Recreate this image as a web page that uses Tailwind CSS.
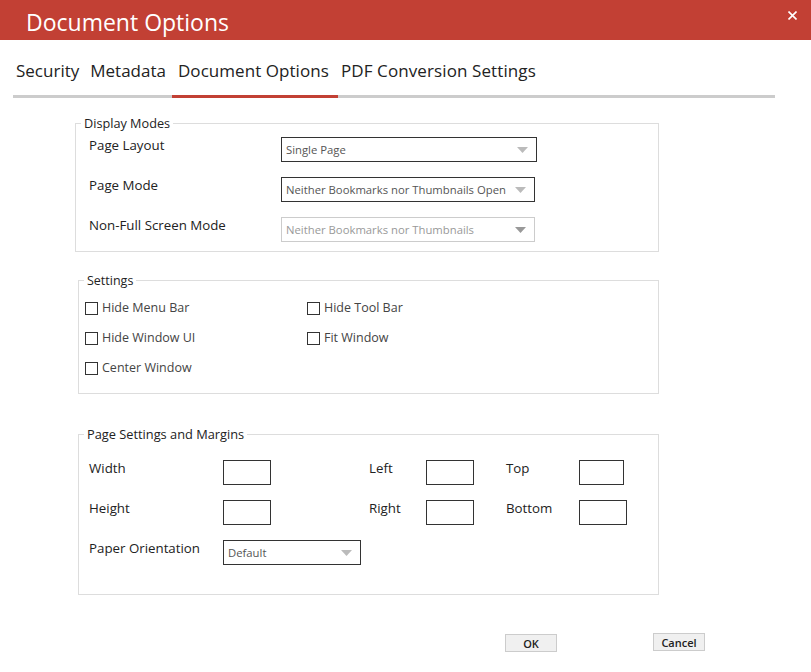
<!DOCTYPE html>
<html lang="en">
<head>
<meta charset="UTF-8" />
<title>Document Options</title>
<script src="https://cdn.jsdelivr.net/npm/@tailwindcss/browser@4"></script>
</head>
<body class="bg-white text-[#222] font-['Open_Sans',sans-serif] overflow-hidden">
<div class="w-[811px] h-[672px]">
  <header class="h-10 bg-[#c24034] flex items-center justify-between pl-[26px] pr-[14px] text-white">
    <h1 class="text-[23px] leading-none mt-[4px]">Document Options</h1>
    <svg class="w-[9px] h-[9px] mb-[10px]" viewBox="0 0 9 9" fill="none" stroke="white" stroke-width="1.6"><path d="M.5.5l8 8M8.5.5l-8 8"/></svg>
  </header>

  <nav class="mt-[16px] ml-[13px] w-[762px] h-[42px] border-b-[3px] border-[#ccc] flex text-[17px] leading-[30px]">
    <div class="h-[42px] pl-[3px] pr-[5px]">Security</div>
    <div class="h-[42px] px-[6px]">Metadata</div>
    <div class="h-[42px] pl-[6px] border-b-[3px] border-[#c24034] w-[166px] whitespace-nowrap tracking-[0.05px]">Document Options</div>
    <div class="h-[42px] pl-[3px] whitespace-nowrap tracking-[0.1px]">PDF Conversion Settings</div>
  </nav>

  <section class="relative mt-[25px] ml-[75px] w-[584px] h-[129px] border border-[#ddd] pt-[13px] pl-[13px]">
    <span class="absolute -top-[9px] left-[5px] bg-white px-[3px] text-[12.7px] leading-[17px]">Display Modes</span>
    <div class="grid grid-cols-[192px_auto] gap-y-[15px] justify-start text-[13.3px]">
      <div class="leading-[17px]">Page Layout</div>
      <div class="w-[256px] h-[25px] border border-[#333] flex items-center justify-between pl-1 pr-[8px] text-[11.3px] text-[#555]"><span class="pt-px">Single Page</span><svg class="w-[11px] h-[6px]" viewBox="0 0 11 6"><path d="M0 0h11L5.5 6z" fill="#bbb"/></svg></div>
      <div class="leading-[17px]">Page Mode</div>
      <div class="w-[254px] h-[25px] border border-[#333] flex items-center justify-between pl-1 pr-[8px] text-[11.3px] text-[#555] whitespace-nowrap"><span class="pt-px">Neither Bookmarks nor Thumbnails Open</span><svg class="w-[11px] h-[6px]" viewBox="0 0 11 6"><path d="M0 0h11L5.5 6z" fill="#bbb"/></svg></div>
      <div class="leading-[17px]">Non-Full Screen Mode</div>
      <div class="w-[254px] h-[25px] border border-[#ccc] flex items-center justify-between pl-1 pr-[8px] text-[11.3px] text-[#999]"><span class="pt-px">Neither Bookmarks nor Thumbnails</span><svg class="w-[11px] h-[6px]" viewBox="0 0 11 6"><path d="M0 0h11L5.5 6z" fill="#999"/></svg></div>
    </div>
  </section>

  <section class="relative mt-[28px] ml-[78px] w-[581px] h-[114px] border border-[#ddd] pt-[19px] pl-[6px]">
    <span class="absolute -top-[9px] left-[5px] bg-white px-[3px] text-[12.5px] leading-[17px]">Settings</span>
    <div class="grid grid-cols-[222px_auto] justify-start gap-y-[13px] text-[12.5px] text-[#444]">
      <label class="flex items-center gap-[4px] h-[17px]"><span class="w-[13px] h-[13px] border border-[#333]"></span>Hide Menu Bar</label>
      <label class="flex items-center gap-[4px] h-[17px]"><span class="w-[13px] h-[13px] border border-[#333]"></span>Hide Tool Bar</label>
      <label class="flex items-center gap-[4px] h-[17px]"><span class="w-[13px] h-[13px] border border-[#333]"></span>Hide Window UI</label>
      <label class="flex items-center gap-[4px] h-[17px]"><span class="w-[13px] h-[13px] border border-[#333]"></span>Fit Window</label>
      <label class="flex items-center gap-[4px] h-[17px]"><span class="w-[13px] h-[13px] border border-[#333]"></span>Center Window</label>
    </div>
  </section>

  <section class="relative mt-[40px] ml-[78px] w-[581px] h-[161px] border border-[#ddd] pt-[25px] pl-[10px]">
    <span class="absolute -top-[9px] left-[5px] bg-white px-[3px] text-[12.8px] leading-[17px]">Page Settings and Margins</span>
    <div class="grid grid-cols-[134px_146px_57px_80px_73px_auto] justify-start gap-y-[15px] text-[13.3px]">
      <div class="leading-[17px]">Width</div>
      <div class="w-[48px] h-[25px] border border-[#333]"></div>
      <div class="leading-[17px]">Left</div>
      <div class="w-[48px] h-[25px] border border-[#333]"></div>
      <div class="leading-[17px]">Top</div>
      <div class="w-[45px] h-[25px] border border-[#333]"></div>
      <div class="leading-[17px]">Height</div>
      <div class="w-[48px] h-[25px] border border-[#333]"></div>
      <div class="leading-[17px]">Right</div>
      <div class="w-[48px] h-[25px] border border-[#333]"></div>
      <div class="leading-[17px]">Bottom</div>
      <div class="w-[48px] h-[25px] border border-[#333]"></div>
      <div class="leading-[17px] whitespace-nowrap">Paper Orientation</div>
      <div class="w-[138px] h-[25px] border border-[#333] flex items-center justify-between pl-1 pr-[8px] text-[11.3px] text-[#555]"><span class="pt-px">Default</span><svg class="w-[11px] h-[6px]" viewBox="0 0 11 6"><path d="M0 0h11L5.5 6z" fill="#bbb"/></svg></div>
    </div>
  </section>

  <footer class="mt-[39px] ml-[505px] flex items-start gap-[96px] text-[11px] font-semibold">
    <button class="w-[52px] h-[18px] bg-[#f0f0f0] border border-[#ccc] leading-none">OK</button>
    <button class="w-[52px] h-[18px] -mt-px bg-[#f0f0f0] border border-[#ccc] leading-none">Cancel</button>
  </footer>
</div>
</body>
</html>
